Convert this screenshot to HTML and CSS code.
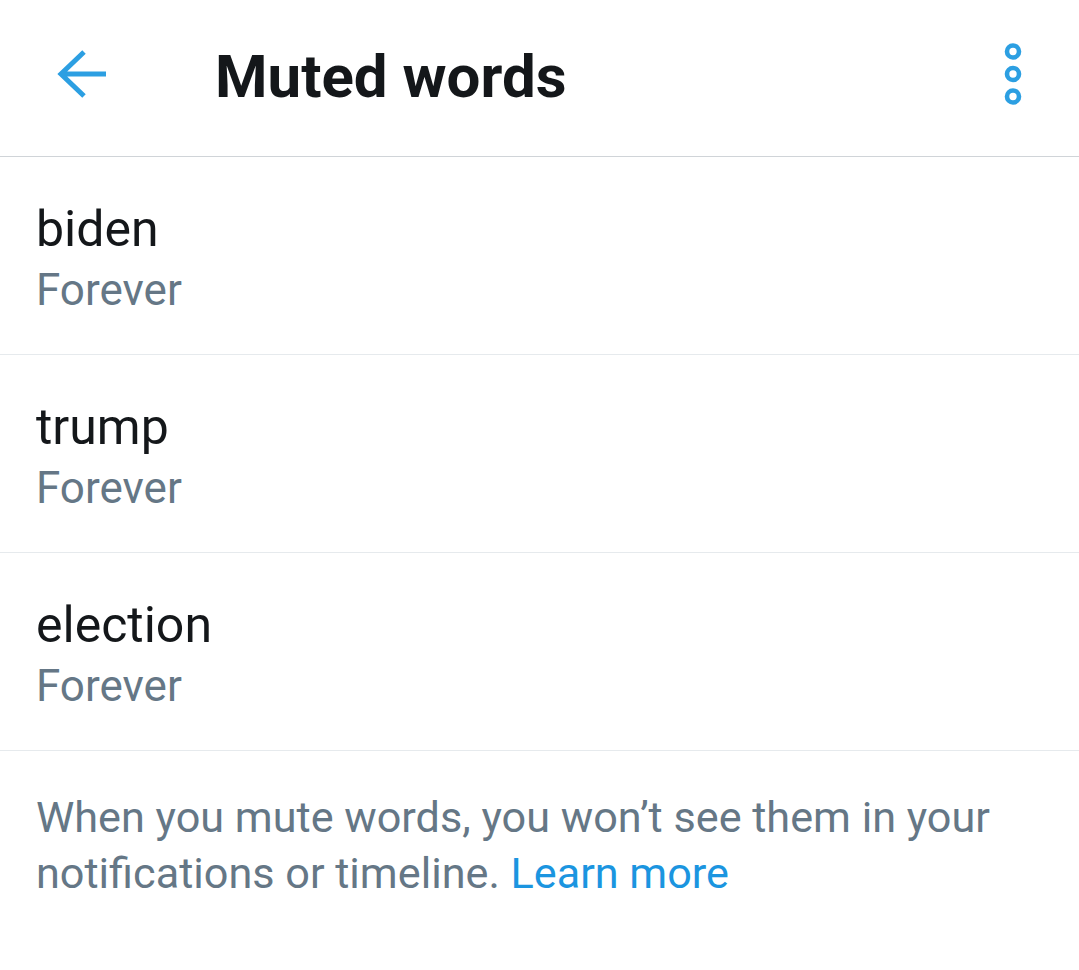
FILE: index.html
```html
<!DOCTYPE html>
<html>
<head>
<meta charset="utf-8">
<link rel="stylesheet" href="styles.css">
</head>
<body>
<header class="bar">
  <div class="back">
    <svg width="52" height="48" viewBox="0 0 52 48"><path d="M5 24 H50 M28 2 L5 24 L28 46" fill="none" stroke="#2c9fe2" stroke-width="5" stroke-linejoin="miter"/></svg>
  </div>
  <h1 class="title">Muted words</h1>
  <div class="more">
    <svg width="20" height="64" viewBox="0 0 20 64"><circle cx="10" cy="9.5" r="6" fill="none" stroke="#2c9fe2" stroke-width="4.6"/><circle cx="10" cy="32" r="6" fill="none" stroke="#2c9fe2" stroke-width="4.6"/><circle cx="10" cy="54.5" r="6" fill="none" stroke="#2c9fe2" stroke-width="4.6"/></svg>
  </div>
</header>
<ul class="list">
  <li class="row"><div class="word">biden</div><div class="dur">Forever</div></li>
  <li class="row"><div class="word">trump</div><div class="dur">Forever</div></li>
  <li class="row"><div class="word">election</div><div class="dur">Forever</div></li>
</ul>
<p class="note">When you mute words, you won’t see them in your notifications or timeline. <a class="link">Learn more</a></p>
</body>
</html>
```
FILE: styles.css
```css
html, body { margin: 0; padding: 0; background: #fff; }
body { font-family: Roboto, "Noto Sans", sans-serif; color: #14171a; width: 1079px; }
.bar { height: 148px; padding-bottom: 8px; border-bottom: 1px solid #d0d4d8; display: flex; align-items: center; }
.back { width: 52px; height: 48px; margin-left: 56px; display: flex; }
.title { margin: 5px 0 0 107px; font-size: 60px; font-weight: 700; line-height: 70px; color: #14171a; flex: 1; }
.more { width: 20px; height: 64px; margin-right: 56px; display: flex; }
.list { list-style: none; margin: 0; padding: 0; }
.row { padding: 42px 36px 32px; border-bottom: 1px solid #e6eaed; }
.word { font-size: 50px; line-height: 60px; color: #14171a; }
.dur { font-size: 44px; line-height: 63px; color: #657786; }
.note { margin: 0; padding: 39px 36px 0; font-size: 43.2px; line-height: 56px; color: #657786; }
.link { color: #1b95e0; }
```
